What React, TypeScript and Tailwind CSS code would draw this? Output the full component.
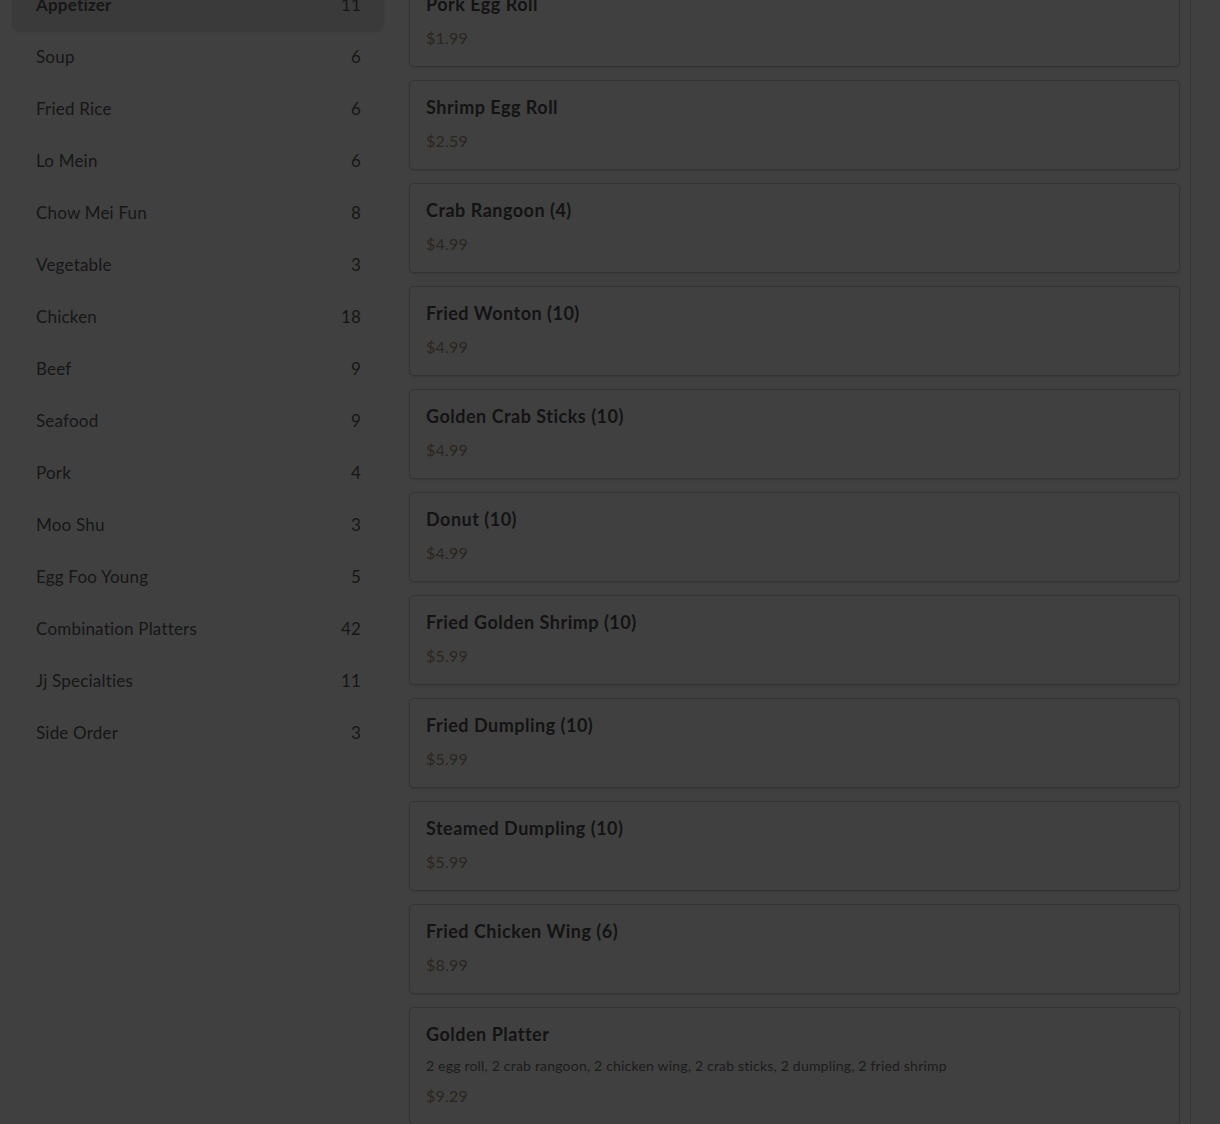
const CATEGORIES = [
  { name: 'Appetizer', count: 11, active: true },
  { name: 'Soup', count: 6 },
  { name: 'Fried Rice', count: 6 },
  { name: 'Lo Mein', count: 6 },
  { name: 'Chow Mei Fun', count: 8 },
  { name: 'Vegetable', count: 3 },
  { name: 'Chicken', count: 18 },
  { name: 'Beef', count: 9 },
  { name: 'Seafood', count: 9 },
  { name: 'Pork', count: 4 },
  { name: 'Moo Shu', count: 3 },
  { name: 'Egg Foo Young', count: 5 },
  { name: 'Combination Platters', count: 42 },
  { name: 'Jj Specialties', count: 11 },
  { name: 'Side Order', count: 3 },
]

const ITEMS: { name: string; price: string; desc?: string }[] = [
  { name: 'Pork Egg Roll', price: '$1.99' },
  { name: 'Shrimp Egg Roll', price: '$2.59' },
  { name: 'Crab Rangoon (4)', price: '$4.99' },
  { name: 'Fried Wonton (10)', price: '$4.99' },
  { name: 'Golden Crab Sticks (10)', price: '$4.99' },
  { name: 'Donut (10)', price: '$4.99' },
  { name: 'Fried Golden Shrimp (10)', price: '$5.99' },
  { name: 'Fried Dumpling (10)', price: '$5.99' },
  { name: 'Steamed Dumpling (10)', price: '$5.99' },
  { name: 'Fried Chicken Wing (6)', price: '$8.99' },
  {
    name: 'Golden Platter',
    price: '$9.29',
    desc: '2 egg roll, 2 crab rangoon, 2 chicken wing, 2 crab sticks, 2 dumpling, 2 fried shrimp',
  },
]

function Sidebar() {
  return (
    <aside className="w-[372px] shrink-0 -mt-[21px]">
      {CATEGORIES.map((c) => (
        <div
          key={c.name}
          className={`flex h-[52px] items-center justify-between rounded-lg pl-6 pr-[23px] text-[17px] tracking-[0.2px] text-[#161616] ${
            c.active ? 'bg-[#3a3a3a] font-bold shadow-[0_1px_2px_rgba(0,0,0,0.12)]' : ''
          }`}
        >
          <span>{c.name}</span>
          <span className={c.active ? 'font-normal' : ''}>{c.count}</span>
        </div>
      ))}
    </aside>
  )
}

function ItemCard({ name, price, desc }: { name: string; price: string; desc?: string }) {
  return (
    <div className="rounded-[5px] border border-[#343434] bg-[#404040] px-4 pt-[15px] pb-[17px] shadow-[0_1px_2px_rgba(0,0,0,0.12)]">
      <div className="text-[18px] font-bold leading-[22px] tracking-[0.5px] text-[#131313]">{name}</div>
      {desc && <div className="mt-[11px] text-[14px] leading-5 tracking-[0.2px] text-[#1b1b1b]">{desc}</div>}
      <div className={`${desc ? 'mt-[9px]' : 'mt-3'} text-[16px] leading-[22px] tracking-[0.2px] text-[#2a251e]`}>
        {price}
      </div>
    </div>
  )
}

export default function App() {
  return (
    <div
      className="h-[1124px] overflow-hidden bg-[#404040]"
      style={{ fontFamily: 'Lato, "Open Sans", sans-serif' }}
    >
      <div className="flex pl-3">
        <Sidebar />
        <main className="ml-[25px] flex w-[782px] flex-col gap-[13px] border-r border-[#363636] pr-[10px] -mt-[23px]">
          {ITEMS.map((it) => (
            <ItemCard key={it.name} {...it} />
          ))}
        </main>
      </div>
    </div>
  )
}
